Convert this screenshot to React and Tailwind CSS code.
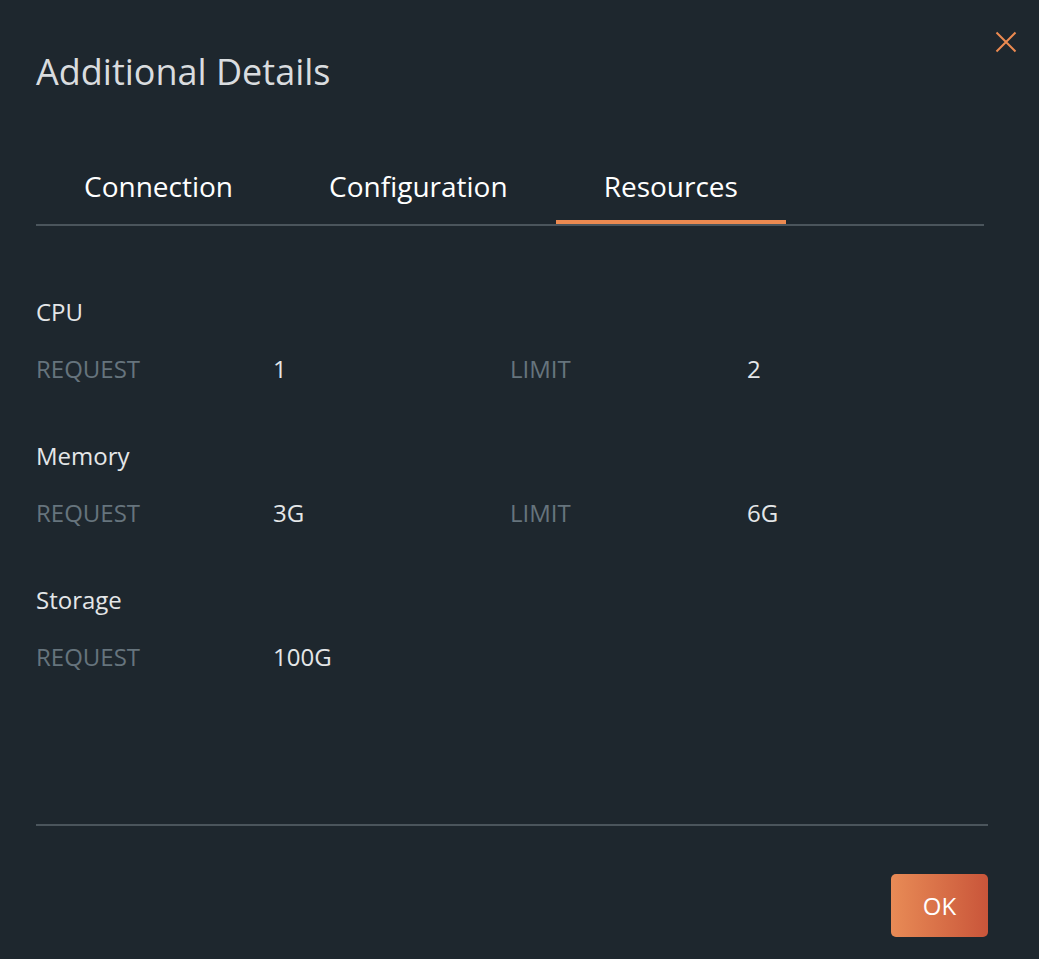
import React from "react";

const font = { fontFamily: '"Open Sans", "Noto Sans", sans-serif' };

function Row({ items }) {
  return (
    <div className="grid grid-cols-4 h-[34px] items-center">
      {items.map((t, i) => (
        <div
          key={i}
          className={
            i % 2 === 0
              ? "text-[24px] leading-[34px] text-[#66747d]"
              : "text-[24px] leading-[34px] text-[#e4e6e8]"
          }
        >
          {t}
        </div>
      ))}
    </div>
  );
}

function Section({ title, items }) {
  return (
    <div className="flex flex-col">
      <div className="h-[34px] flex items-center text-[24px] leading-[34px] text-[#e4e6e8]">{title}</div>
      <div className="h-[23px]" />
      <Row items={items} />
    </div>
  );
}

function Tab({ label, active, className = "" }) {
  return (
    <div
      className={
        "px-[48px] h-[60px] text-[28px] leading-[45px] text-white " +
        (active ? "border-b-4 border-[#ec8a51] " : "") +
        className
      }
    >
      {label}
    </div>
  );
}

export default function App() {
  return (
    <div
      className="relative w-[1039px] h-[959px] bg-[#1e272e] flex flex-col pl-[36px] pr-[55px]"
      style={font}
    >
      <button className="absolute right-[22px] top-[31px] w-[22px] h-[22px] flex items-center justify-center">
        <svg width="22" height="22" viewBox="0 0 22 22" fill="none">
          <path d="M1.5 1.5 L20.5 20.5 M20.5 1.5 L1.5 20.5" stroke="#ec8a51" strokeWidth="2" />
        </svg>
      </button>

      <h1 className="mt-[50px] h-[44px] flex items-center text-[36px] leading-[44px] text-[#d9dcdf] font-normal">
        Additional Details
      </h1>

      <div className="mt-[70px] flex border-b-2 border-[#4b555c]">
        <Tab label="Connection" />
        <Tab label="Configuration" />
        <Tab label="Resources" active />
      </div>

      <div className="mt-[69px] flex flex-col gap-[53px]">
        <Section title="CPU" items={["REQUEST", "1", "LIMIT", "2"]} />
        <Section title="Memory" items={["REQUEST", "3G", "LIMIT", "6G"]} />
        <Section title="Storage" items={["REQUEST", "100G", "", ""]} />
      </div>

      <div className="mt-[150px] border-t-2 border-[#4b555c] -mr-[4px]" />

      <div className="mt-[48px] flex justify-end -mr-[4px]">
        <button className="w-[97px] h-[63px] rounded-[5px] bg-gradient-to-r from-[#e88b56] to-[#c9553a] text-white text-[24px] flex items-center justify-center">
          OK
        </button>
      </div>
    </div>
  );
}
